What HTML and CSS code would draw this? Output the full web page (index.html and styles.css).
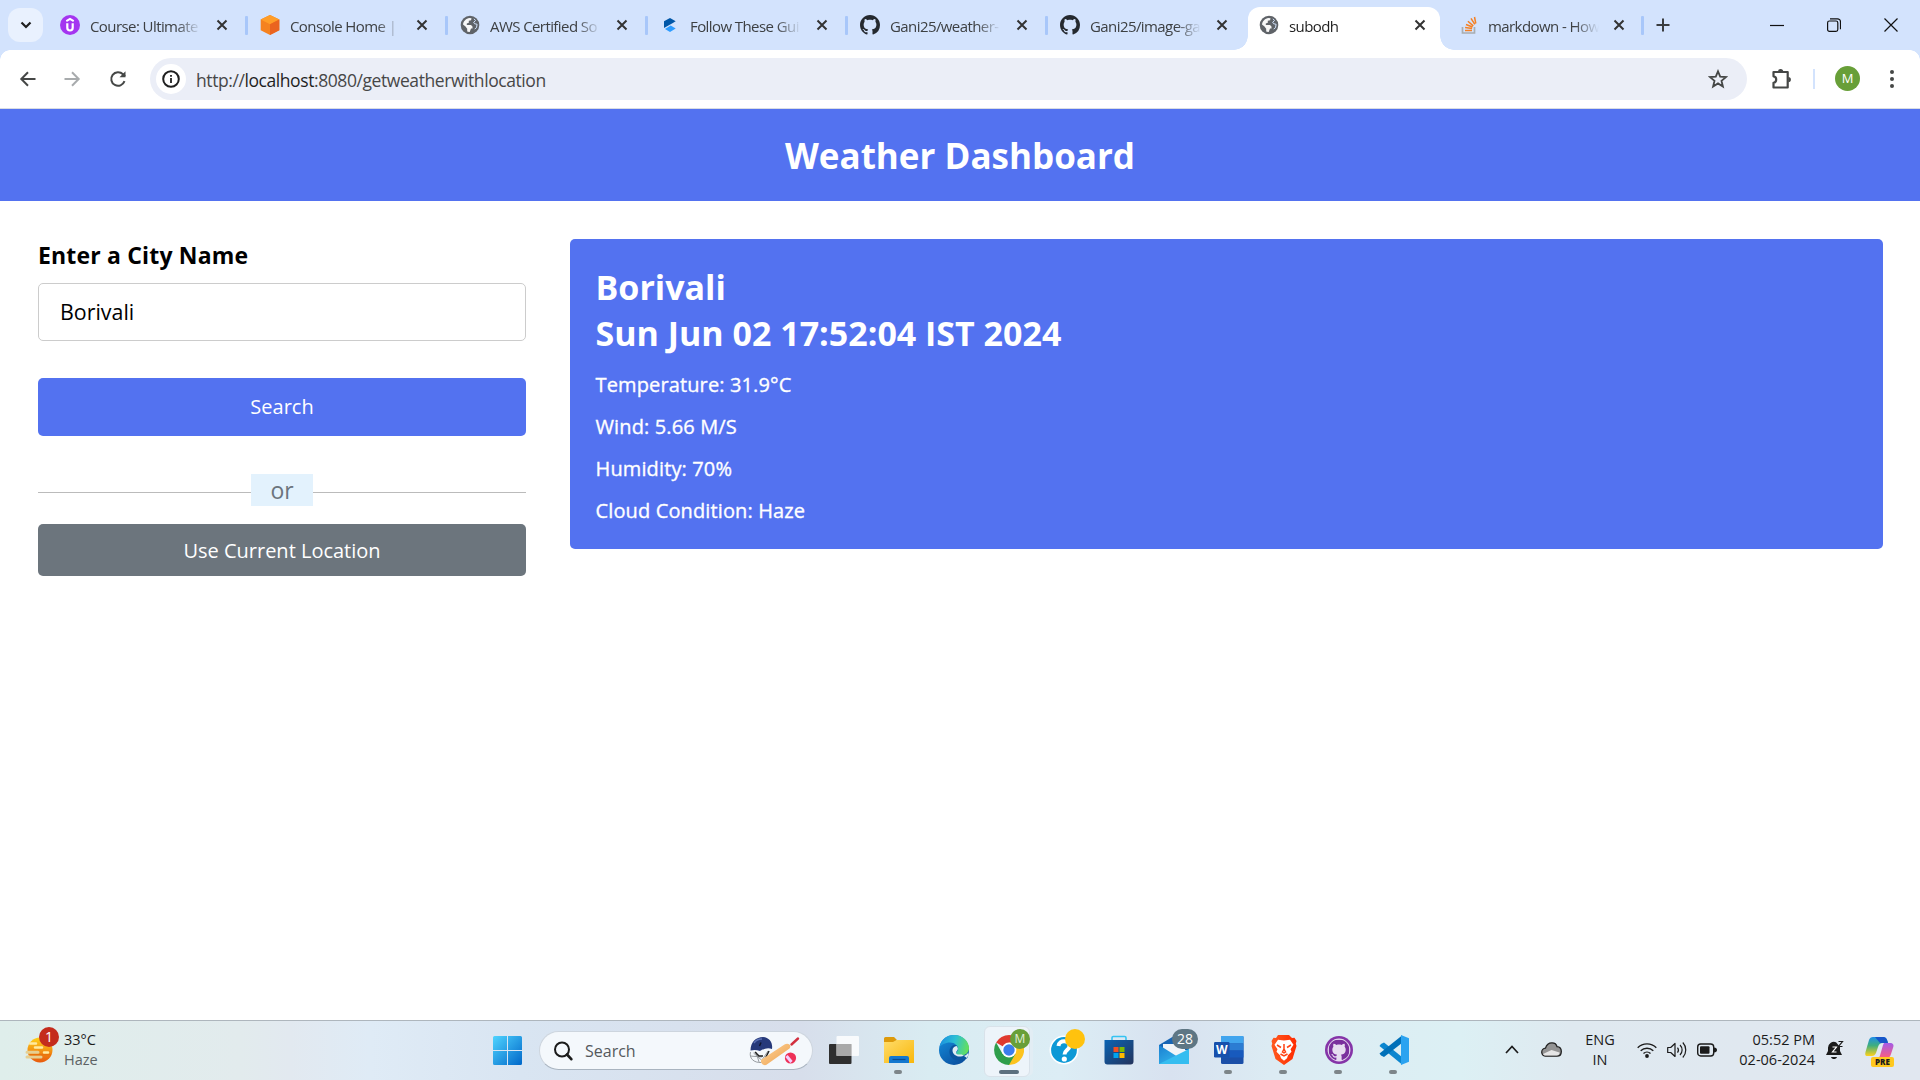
FILE: index.html
```html
<!DOCTYPE html>
<html lang="en">
<head>
<meta charset="utf-8">
<title>subodh</title>
<link rel="stylesheet" href="styles.css">
</head>
<body>
<svg class="defs" aria-hidden="true">
  <defs>
    <symbol id="close" viewBox="0 0 12 12"><path d="M1.500 1.500l9 9M10.500 1.500l-9 9" fill="none" stroke="currentColor" stroke-width="2"/></symbol>
    <symbol id="globe" viewBox="0 0 20 20"><circle cx="10" cy="10" r="9.300" fill="#5f6368"/><path d="M3 9.500c.5-3.500 3-6 6.500-6.500l2 .2-.4 2-2.300.5v2l-2 .8v1.500h4.200l1.500 1.600v2h-1.500l-1.300 3.300c-1 .2-2-.2-2.500-.5v-2.600L5.500 11.500z" fill="#fff" opacity=".95"/><path d="M14 3.800l1.500 1.800-1.800 1.600.8 1.500 2.600.6-.6 3.400-1.800 1.300" fill="none" stroke="#d3e3fd" stroke-width="1"/></symbol>
    <symbol id="github" viewBox="0 0 16 16"><path d="M8 0C3.580 0 0 3.580 0 8c0 3.540 2.290 6.530 5.470 7.590.4.070.55-.17.55-.38 0-.19-.01-.82-.01-1.490-2.010.37-2.530-.49-2.690-.94-.09-.23-.48-.94-.82-1.130-.28-.15-.68-.52-.01-.53.63-.01 1.080.58 1.230.82.72 1.210 1.870.87 2.330.66.070-.52.28-.87.51-1.070-1.780-.2-3.640-.89-3.640-3.950 0-.87.31-1.590.82-2.150-.08-.2-.36-1.020.08-2.120 0 0 .67-.21 2.200.82.640-.18 1.320-.27 2-.27s1.360.09 2 .27c1.530-1.040 2.200-.82 2.200-.82.440 1.100.16 1.920.08 2.120.51.560.82 1.270.82 2.150 0 3.070-1.870 3.750-3.650 3.950.29.25.54.730.54 1.480 0 1.070-.01 1.930-.01 2.200 0 .21.15.46.55.38A8.010 8.010 0 0 0 16 8c0-4.420-3.580-8-8-8z"/></symbol>
    <linearGradient id="gWin" x1="0" y1="0" x2="1" y2="1"><stop offset="0" stop-color="#4fd4ff"/><stop offset="1" stop-color="#0067c9"/></linearGradient>
    <linearGradient id="gSun" x1="0" y1="0" x2="0" y2="1"><stop offset="0" stop-color="#ffd21a"/><stop offset="1" stop-color="#e8590c"/></linearGradient>
    <linearGradient id="gFolder" x1="0" y1="0" x2="1" y2="1"><stop offset="0" stop-color="#ffdc6a"/><stop offset="1" stop-color="#f9b70b"/></linearGradient>
    <linearGradient id="gEdge" x1="0" y1=".3" x2="1" y2=".5"><stop offset="0" stop-color="#1b8fe0"/><stop offset=".5" stop-color="#2cc0d4"/><stop offset="1" stop-color="#64e05c"/></linearGradient>
    <linearGradient id="gEdge2" x1="0" y1="0" x2=".7" y2="1"><stop offset="0" stop-color="#1590df"/><stop offset="1" stop-color="#0a4f9e"/></linearGradient>
    <linearGradient id="gStore" x1="0" y1="0" x2="1" y2="1"><stop offset="0" stop-color="#0a64b4"/><stop offset="1" stop-color="#24335c"/></linearGradient>
    <linearGradient id="gMail" x1="0" y1="0" x2="1" y2="1"><stop offset="0" stop-color="#1b7fd1"/><stop offset="1" stop-color="#39c5f3"/></linearGradient>
    <linearGradient id="gBrave" x1="0" y1="0" x2="1" y2="0"><stop offset="0" stop-color="#ff5a1f"/><stop offset="1" stop-color="#ff2a00"/></linearGradient>
    <linearGradient id="gCop1" x1="0" y1="0" x2="0" y2="1"><stop offset="0" stop-color="#1f8fe8"/><stop offset=".45" stop-color="#3fae7e"/><stop offset="1" stop-color="#ffd21a"/></linearGradient>
    <linearGradient id="gCop2" x1="0" y1="0" x2="0" y2="1"><stop offset="0" stop-color="#a35be8"/><stop offset="1" stop-color="#fb5d7d"/></linearGradient>
    <linearGradient id="gBat" x1="0" y1="0" x2="1" y2="1"><stop offset="0" stop-color="#ffd59b"/><stop offset="1" stop-color="#ec9f4c"/></linearGradient>
  </defs>
</svg>

<div class="screen">
  <div class="tabstrip">
    <button class="tab-search" aria-label="Search tabs"><svg width="12" height="8" viewBox="0 0 12 8"><path d="M1.500 1.500L6 6l4.500-4.500" fill="none" stroke="#1f1f1f" stroke-width="2.200"/></svg></button>
    <div class="tab"><svg class="fav" viewBox="0 0 20 20"><circle cx="10" cy="10" r="10" fill="#a435f0"/><path d="M6.300 6.200L10 4l3.700 2.200" fill="none" stroke="#fff" stroke-width="2"/><path d="M7.300 8.300v4.500c0 3.600 5.400 3.600 5.400 0V8.300" fill="none" stroke="#fff" stroke-width="2.200"/></svg><span class="tab-title">Course: Ultimate</span><svg class="x"><use href="#close"/></svg></div>
    <div class="tab"><svg class="fav" viewBox="0 0 20 20"><path d="M10 0l9.300 4.500v10.800L10 20 .7 15.300V4.500z" fill="#f58220"/><path d="M10 0l9.300 4.500L10 9.200.7 4.500z" fill="#ff9d28"/><path d="M10 9.200l9.300-4.700v10.800L10 20z" fill="#ea6420"/></svg><span class="tab-title">Console Home | C</span><svg class="x"><use href="#close"/></svg></div>
    <div class="tab"><svg class="fav"><use href="#globe"/></svg><span class="tab-title">AWS Certified So</span><svg class="x"><use href="#close"/></svg></div>
    <div class="tab"><svg class="fav" viewBox="0 0 20 20"><path d="M4 6.300l6-3.400 5.700 3.300-3.300 2L4 13z" fill="#0057a8"/><path d="M15.700 13.500L10 17l-5-3 5.700-3.500z" fill="#2d9cff"/></svg><span class="tab-title">Follow These Gui</span><svg class="x"><use href="#close"/></svg></div>
    <div class="tab"><svg class="fav gh"><use href="#github"/></svg><span class="tab-title">Gani25/weather-</span><svg class="x"><use href="#close"/></svg></div>
    <div class="tab no-sep"><svg class="fav gh"><use href="#github"/></svg><span class="tab-title">Gani25/image-ga</span><svg class="x"><use href="#close"/></svg></div>
    <div class="tab active"><svg class="fav"><use href="#globe"/></svg><span class="tab-title">subodh</span><svg class="x"><use href="#close"/></svg></div>
    <div class="tab last"><svg class="fav" viewBox="0 0 20 20"><path d="M2.500 12v6h12v-6" fill="none" stroke="#a9adb0" stroke-width="1.700"/><path d="M5 15.500h7M5.100 12.600l7 .9M6 9.500l6.500 2.500M7.900 6.300l5.400 4.600M11 3.300l3.800 6M14.500 2l1.300 6.500" stroke="#f48024" stroke-width="1.500"/></svg><span class="tab-title">markdown - How</span><svg class="x"><use href="#close"/></svg></div>
    <button class="new-tab" aria-label="New tab"><svg width="14" height="14" viewBox="0 0 14 14"><path d="M7 .5v13M.5 7h13" stroke="#3a3d40" stroke-width="2"/></svg></button>
    <div class="win-controls">
      <svg width="14" height="14" viewBox="0 0 14 14"><path d="M0 7.500h14" stroke="#111" stroke-width="1.200"/></svg>
      <svg width="14" height="14" viewBox="0 0 14 14"><rect x=".6" y="3" width="10.200" height="10.300" rx="1.800" fill="none" stroke="#111" stroke-width="1.200"/><path d="M3 .8h7.500a3 3 0 0 1 3 3v7.400" fill="none" stroke="#111" stroke-width="1.200"/></svg>
      <svg width="14" height="14" viewBox="0 0 14 14"><path d="M.5.500l13 13M13.500.500l-13 13" stroke="#111" stroke-width="1.200"/></svg>
    </div>
  </div>

  <div class="toolbar">
    <svg class="nav" viewBox="0 0 20 20"><path d="M17.500 10H4M10 3.300L3.300 10l6.700 6.700" fill="none" stroke="#454746" stroke-width="2"/></svg>
    <svg class="nav" viewBox="0 0 20 20"><path d="M2.500 10H16M10 3.300l6.700 6.700-6.700 6.700" fill="none" stroke="#a8abad" stroke-width="2"/></svg>
    <svg class="nav" viewBox="0 0 20 20"><path d="M16.500 12.200A6.800 6.800 0 1 1 15 5.300l2 2" fill="none" stroke="#454746" stroke-width="2"/><path d="M17.500 2.200v6h-6z" fill="#454746"/></svg>
    <div class="omnibox">
      <span class="info"><svg width="18" height="18" viewBox="0 0 18 18"><circle cx="9" cy="9" r="7.800" fill="none" stroke="#1f1f1f" stroke-width="2"/><path d="M9 8v5M9 5v1.800" stroke="#1f1f1f" stroke-width="1.800"/></svg></span>
      <span class="url">http://<b>localhost</b>:8080/getweatherwithlocation</span>
      <svg class="star" width="20" height="20" viewBox="0 0 20 20"><path d="M10 2.300l2.200 5.400 5.800.4-4.500 3.700 1.400 5.700-4.900-3.100-4.900 3.100 1.400-5.700L2 8.100l5.800-.4z" fill="none" stroke="#454746" stroke-width="1.800"/></svg>
    </div>
    <svg class="ext" width="24" height="24" viewBox="0 0 24 24"><path d="M3.500 5h14.200v15.500H3.500v-4.700c3.600-.3 3.600-6.200 0-6.500z" fill="none" stroke="#454746" stroke-width="2.200" stroke-linejoin="round"/><path d="M8 4.500a2.600 2.600 0 0 1 5.200 0zM18.300 10a2.600 2.600 0 0 1 0 5.200z" fill="#454746"/></svg>
    <span class="divider"></span>
    <span class="avatar">M</span>
    <svg class="dots" width="6" height="18" viewBox="0 0 6 18"><g fill="#454746"><circle cx="3" cy="2" r="2"/><circle cx="3" cy="9" r="2"/><circle cx="3" cy="16" r="2"/></g></svg>
  </div>

  <main class="page">
    <h1 class="page-title">Weather Dashboard</h1>
    <div class="container">
      <section class="weather-input">
        <h3>Enter a City Name</h3>
        <input class="city-input" type="text" value="Borivali">
        <button class="btn search-btn">Search</button>
        <div class="separator"><span>or</span></div>
        <button class="btn location-btn">Use Current Location</button>
      </section>
      <section class="weather-card">
        <h2>Borivali</h2>
        <h2>Sun Jun 02 17:52:04 IST 2024</h2>
        <h6 class="temp">Temperature: 31.9°C</h6>
        <h6>Wind: 5.66 M/S</h6>
        <h6>Humidity: 70%</h6>
        <h6>Cloud Condition: Haze</h6>
      </section>
    </div>
  </main>

  <footer class="taskbar">
    <div class="widget">
      <div class="widget-icon">
        <svg width="28" height="28" viewBox="0 0 28 28"><circle cx="15" cy="14" r="12.500" fill="url(#gSun)"/><path d="M5 7.500h6M10 11.500h7M19 16.500h4" stroke="#ffeaa0" stroke-width="2.500" stroke-linecap="round"/><path d="M2 16.300h11M2 21h14" stroke="#e6cf91" stroke-width="3" stroke-linecap="round"/><path d="M5 18.700h21" stroke="#e8730c" stroke-width="1.300"/></svg>
        <span class="badge red">1</span>
      </div>
      <div class="widget-text"><span>33°C</span><span class="muted">Haze</span></div>
    </div>
    <div class="app"><svg width="29" height="29" viewBox="0 0 29 29"><path d="M0 1.500A1.500 1.500 0 0 1 1.500 0H14v14H0zM15 0h12.500A1.500 1.500 0 0 1 29 1.500V14H15zM0 15h14v14H1.500A1.500 1.500 0 0 1 0 27.500zM15 15h14v12.500a1.500 1.500 0 0 1-1.500 1.500H15z" fill="url(#gWin)"/></svg></div>
    <div class="task-search">
      <svg width="20" height="20" viewBox="0 0 20 20"><circle cx="9" cy="8.500" r="7" fill="none" stroke="#1b1b1b" stroke-width="2"/><path d="M14 13.500l4.300 4.700" stroke="#1b1b1b" stroke-width="2.600" stroke-linecap="round"/></svg>
      <span>Search</span>
      <svg class="cricket" width="52" height="30" viewBox="0 0 52 30"><path d="M2.500 16c-1.500 6 3 11 11 10.500M5.500 17l8 7M2 20l12 1M8 16l3 10M20 15l-6 9" fill="none" stroke="#8d9296" stroke-width=".9"/><path d="M7 16l4 4h4M21 15l-4 8" fill="none" stroke="#222" stroke-width="1.500"/><path d="M2.500 14.500C2.500 6 8 1 15 1c6.500.500 10 5.500 9 12-4-1.500-8-.500-12 2-3.500-1.300-6-1.300-9.500-.500z" fill="#26397a"/><path d="M6 7c2-3 4-4 8-4" fill="none" stroke="#5a70b4" stroke-width="1.500"/><path d="M11.500 10l1.500-3.500" stroke="#10162e" stroke-width="1.500"/><path d="M43.500 8.500l6.500-6" stroke="#d22f3f" stroke-width="2.400" stroke-linecap="round"/><path d="M13.500 23.500L36.500 8.500c3-2 8 0 5 4L18.500 28.800c-3 1.500-7-2-5-5.300z" fill="url(#gBat)"/><circle cx="42.500" cy="22" r="5.600" fill="#ee3158"/><path d="M38.500 20l5 6" stroke="#f3cfff" stroke-width="3"/></svg>
    </div>
    <div class="app"><svg width="30" height="28" viewBox="0 0 30 28"><rect y="8" width="22.500" height="20" rx="1" fill="#2f2f2f"/><rect x="7.500" width="22.500" height="20" rx="1" fill="#fff" opacity=".82"/><path d="M7.500 8h15v12h-15z" fill="#a9a9a9"/></svg></div>
    <div class="app run"><svg width="30" height="28" viewBox="0 0 30 28"><path d="M0 2.500A1.500 1.500 0 0 1 1.500 1H10l3 3-3 4H0z" fill="#dd9a0b"/><path d="M0 6h9l3.500-2H30v23H0z" fill="url(#gFolder)"/><path d="M5 27v-5a2 2 0 0 1 2-2h16a2 2 0 0 1 2 2v5z" fill="#1478cf"/><path d="M8.500 23.500h13" stroke="#0b4c91" stroke-width="1.200"/></svg></div>
    <div class="app"><svg width="30" height="30" viewBox="0 0 30 30"><circle cx="15" cy="15" r="15" fill="url(#gEdge2)"/><path d="M.5 12C2 4 8 0 15 0c9 0 15 6.500 15 13 0 5-4 7.500-8 7.500-3 0-5-1.200-5-2.500s2-1.500 2-4c0-3-3-6.500-8-6.500C6 7.500 2 10 .5 12z" fill="url(#gEdge)"/><path d="M15 10c-3 1-5 4-4.500 8 .7 5 5 7.500 9.500 7.500 4 0 6-1 8.300-2.500L30 18l-4 2c-5 1.500-9 .5-9-2s2-2 2-4c0-1.700-1-3-2-4z" fill="#0b559f"/><path d="M18.900 14c0-1.200-.4-2-1.300-3-2.500.2-4.100 2.200-4.100 4.500 0 4 4.500 6.500 8.500 6 3-.3 6-1.500 7-3.500l.9.900-2 4-5-3.400h-3.800c-3-.7-2-3-.9-4z" fill="#dfedf4"/></svg></div>
    <div class="app current"><svg width="30" height="30" viewBox="0 0 30 30"><path d="M15 15L2.100 7.500A15 15 0 0 1 28 7.500z" fill="#e03a2f"/><path d="M28 7.500H15V30a15 15 0 0 0 13-22.500z" fill="#fcc31e"/><path d="M2.100 7.500A15 15 0 0 0 15 30l6.500-11.200H8.500z" fill="#2e9e4b"/><circle cx="15" cy="15" r="7.400" fill="#fff"/><circle cx="15" cy="15" r="5.700" fill="#3b7ded"/></svg><span class="badge profile">M</span></div>
    <div class="app"><svg width="30" height="30" viewBox="0 0 30 30"><circle cx="15" cy="15" r="13.700" fill="#0d99d6" stroke="#fff" stroke-width="1.600"/><path d="M9.500 11C10 4.500 20.500 5 20.500 11c0 4-5 4.200-5 8.500" fill="none" stroke="#fff" stroke-width="4"/><circle cx="15.300" cy="24" r="2.600" fill="#fff"/></svg><span class="badge yellow"></span></div>
    <div class="app"><svg width="30" height="30" viewBox="0 0 30 30"><path d="M8 6V2.800A1.300 1.300 0 0 1 9.300 1.500h11.400A1.300 1.300 0 0 1 22 2.800V6" fill="none" stroke="#35c3f2" stroke-width="1.600"/><path d="M.5 5h29v21.500a3 3 0 0 1-3 3h-23a3 3 0 0 1-3-3z" fill="url(#gStore)"/><path d="M9.500 12h5v5h-5z" fill="#f25022"/><path d="M15.500 12h5v5h-5z" fill="#7fba00"/><path d="M9.500 18h5v5h-5z" fill="#00a4ef"/><path d="M15.500 18h5v5h-5z" fill="#ffb900"/></svg></div>
    <div class="app"><svg width="30" height="30" viewBox="0 0 30 30"><path d="M0 10L15 1l15 9v5H0z" fill="#1765b5"/><path d="M4 9h22v9l-11 5L4 14z" fill="#f0f4f8"/><path d="M0 10l19 12L30 14v15H0z" fill="url(#gMail)"/><path d="M0 29l30-15v15z" fill="#35bdf0"/></svg><span class="badge count">28</span></div>
    <div class="app run"><svg width="30" height="30" viewBox="0 0 30 30"><rect x="7" y="1" width="22.500" height="28" rx="1.500" fill="#1b4fa8"/><path d="M7 1h22.500v7.500H7z" fill="#41a5ee"/><path d="M7 8.500h22.500v7H7z" fill="#2b7cd3"/><path d="M7 15.500h22.500v7H7z" fill="#185abd"/><rect y="7" width="15.500" height="15.500" rx="1.200" fill="#1750ac"/><text class="word" x="7.800" y="18.800" text-anchor="middle" fill="#fff">W</text></svg></div>
    <div class="app run"><svg width="30" height="30" viewBox="0 0 30 30"><path d="M9 0h11l3 3 2.500-.3L27.500 6l-.7 2.500L27.500 11l-4 13L15 30 6.500 24l-4-13 .7-2.500L2.500 6l2-3.300L7 3z" fill="url(#gBrave)"/><path d="M15 5.500l6-.8 3.500 5-3 4.500 1 2.500-3.500 3.500-1 3-3 2.500-3-2.500-1-3-3.500-3.500 1-2.500-3-4.500 3.500-5z" fill="#fff"/><path d="M15 9v5l-1.500 3 1.500.8 1.500-.8-1.500-3M8 10l4 2.500M22 10l-4 2.500M11.500 19l3.500 2 3.500-2" fill="none" stroke="#ff4314" stroke-width="1.500"/></svg></div>
    <div class="app run"><svg width="30" height="30" viewBox="0 0 30 30"><circle cx="15" cy="15" r="14" fill="#8534a8"/><circle cx="15" cy="15" r="11.400" fill="#e6dcf0"/><svg x="4.500" y="4.500" width="21" height="21" fill="#7a2f9d"><use href="#github"/></svg></svg></div>
    <div class="app run"><svg width="30" height="30" viewBox="0 0 30 30"><path d="M2 9l3-1.500L23 22v7.500L.5 11z" fill="#0b86cf"/><path d="M2 20.500L5 22 23 8V.500L.5 18.500z" fill="#0070b8"/><path d="M22 0l8 3.300v23.400L22 30z" fill="#2ba3f0"/></svg></div>

    <svg class="up" width="14" height="9" viewBox="0 0 14 9"><path d="M1 8l6-6.500L13 8" fill="none" stroke="#1b1b1b" stroke-width="1.700"/></svg>
    <svg class="cloud-icon" width="21" height="15" viewBox="0 0 21 15"><path d="M5 14.200a4 4 0 0 1-.5-8C5.500 2.500 8 .8 11 .8c2.500 0 4.500 1.500 5 3.900 6 .5 5.500 9.500 0 9.500z" fill="#949494" stroke="#222" stroke-width="1.300"/><path d="M2 12l8.500-4L18.500 10.500c0 2-1 3-3 3H5c-1.300 0-2.500-.5-3-1.500z" fill="#e6e6e6"/></svg>
    <div class="lang"><span>ENG</span><span>IN</span></div>
    <svg class="wifi" width="20" height="16" viewBox="0 0 20 16"><path d="M.7 5.700a13.200 13.200 0 0 1 18.600 0M3.700 8.800a8.900 8.900 0 0 1 12.600 0M6.500 11.600a5 5 0 0 1 7 0" fill="none" stroke="#1b1b1b" stroke-width="1.400"/><circle cx="10" cy="14" r="1.900" fill="#1b1b1b"/></svg>
    <svg class="vol" width="20" height="18" viewBox="0 0 20 18"><path d="M.7 6.500h3L8 2.500v13l-4.300-4h-3z" fill="none" stroke="#1b1b1b" stroke-width="1.200" stroke-linejoin="round"/><path d="M10.500 6.500a4 4 0 0 1 0 5M13 4a7 7 0 0 1 0 10M15.800 1.500a11 11 0 0 1 0 15" fill="none" stroke="#1b1b1b" stroke-width="1.200"/></svg>
    <svg class="batt" width="20" height="14" viewBox="0 0 20 14"><rect x=".7" y="1" width="16" height="12" rx="3" fill="none" stroke="#1b1b1b" stroke-width="1.400"/><rect x="3" y="3.300" width="9.500" height="7.400" rx="1" fill="#1b1b1b"/><path d="M17 4.500c4 0 4 5 0 5z" fill="#1b1b1b"/></svg>
    <div class="clock"><span>05:52 PM</span><span>02-06-2024</span></div>
    <svg class="bell" width="18" height="20" viewBox="0 0 18 20"><path d="M0 15l2-4V8a6 6 0 0 1 8-5.800L14 7v4l2 4zM5 17h6c-.8 2.800-5.200 2.800-6 0z" fill="#1b1b1b"/><path d="M6.500 7h4l-4 5h4" fill="none" stroke="#fff" stroke-width="1.200"/><path d="M12.500 1.500h4l-4 5h4" fill="none" stroke="#1b1b1b" stroke-width="1.200"/></svg>
    <div class="copilot"><svg width="29" height="24" viewBox="0 0 29 24"><path d="M8 1h10c3 0 4 2 5 6h-5c-3 0-4 1-5 4l-2 6c-1 2-2 3-4 3H2c-2 0-2-2-1.500-4L4 4c.7-2 2-3 4-3z" fill="url(#gCop1)"/><path d="M10 1h8c3 0 4 2 5 6h-8z" fill="#1756c9"/><path d="M19 7h6c3 0 4 2 3.300 4L26 18c-1 3-2 4-5 4h-9c3 0 3-3 4-6l2-7z" fill="url(#gCop2)"/></svg><span class="pre">PRE</span></div>
  </footer>
</div>
</body>
</html>
```

FILE: styles.css
```css
* { box-sizing: border-box; }
body { margin: 0; font-family: "Open Sans", "Noto Sans", sans-serif; color: #000; }
button { border: 0; padding: 0; font-family: inherit; }
svg { display: block; flex: none; }
h1, h2, h3, h6 { margin: 0; }
.defs { position: absolute; width: 0; height: 0; }
.screen { width: 1920px; height: 1080px; display: flex; flex-direction: column; overflow: hidden; background: #fff; }

/* Browser tab strip */
.tabstrip { height: 50px; display: flex; background: #d3e3fd; padding-left: 8px; flex: none; }
.tab-search { width: 35px; height: 34px; margin: 8px 5px 0 0; border-radius: 12px; background: #e9f1fe; display: grid; place-items: center; }
.tab { width: 200px; height: 50px; padding-left: 12px; display: flex; align-items: center; position: relative; color: #3d4043; }
.tab::after { content: ""; position: absolute; right: 0; top: 16px; width: 3px; height: 19px; border-radius: 1px; background: #a8c7fa; }
.tab.no-sep::after { display: none; }
.fav { width: 20px; height: 20px; }
.fav.gh { fill: #24292f; }
.tab-title { width: 111px; margin-left: 10px; padding-top: 2px; font-size: 15px; letter-spacing: -.58px; line-height: 20px; white-space: nowrap; -webkit-mask-image: linear-gradient(90deg, #000 78%, transparent); mask-image: linear-gradient(90deg, #000 78%, transparent); }
.x { width: 12px; height: 12px; margin-left: 15px; color: #333; }
.tab.active { height: 43px; margin-top: 7px; width: 192px; margin-right: 8px; padding: 0 0 7px 11px; background: #fff; border-radius: 12px 12px 0 0; color: #1f1f1f; }
.tab.active .x { margin-left: 14px; }
.tab.active::before, .tab.active::after { content: ""; position: absolute; bottom: 0; top: auto; width: 14px; height: 14px; border-radius: 0; }
.tab.active::before { left: -14px; background: radial-gradient(circle at 0 0, transparent 13.500px, #fff 14px); }
.tab.active::after { right: -14px; background: radial-gradient(circle at 100% 0, transparent 13.500px, #fff 14px); }
.tab.last { width: 196px; }
.tab.last .tab-title { margin-left: 8px; }
.tab.last .x { margin-left: 14px; }
.new-tab { width: 37px; background: none; display: grid; place-items: center; }
.win-controls { margin-left: auto; margin-right: 22px; display: flex; gap: 43px; align-items: center; }

/* Browser toolbar */
.toolbar { height: 59px; flex: none; display: flex; align-items: center; padding: 0 24px 1px 17px; border-bottom: 1px solid #d8dce4;
  background: radial-gradient(circle at 10px 10px, #fff 9.500px, #d3e3fd 10px) 0 0 / 10px 10px no-repeat, radial-gradient(circle at 0 10px, #fff 9.500px, #d3e3fd 10px) 100% 0 / 10px 10px no-repeat, #fff; }
.nav { width: 20px; height: 20px; margin: 0 25px 0 1px; }
.nav:nth-child(2) { margin: 0 25px 0 -1px; }
.nav:nth-child(3) { margin: 0 22px 0 1px; }
.omnibox { width: 1597px; height: 42px; border-radius: 21px; background: #ebeef7; display: flex; align-items: center; padding-left: 6px; }
.info { width: 30px; height: 30px; border-radius: 50%; background: #fff; display: grid; place-items: center; }
.url { margin-left: 10px; padding-top: 2px; font-size: 17.500px; letter-spacing: -.42px; color: #474747; }
.url b { font-weight: 400; color: #1f1f1f; }
.star { margin: 0 19px 0 auto; }
.ext { margin-left: 23px; }
.divider { width: 2px; height: 20px; margin: 0 20px 0 19px; background: #d3e3fd; }
.avatar { width: 25px; height: 25px; border-radius: 50%; background: #689f38; color: #fff; font-size: 13px; line-height: 25px; text-align: center; }
.dots { margin-left: auto; margin-right: 1px; }

/* Dashboard page */
.page { flex: 1; }
.page-title { height: 92px; padding-top: 1px; background: #5372f0; color: #fff; text-align: center; font-size: 35px; line-height: 92px; font-weight: 700; }
.container { display: flex; align-items: flex-start; gap: 44px; padding: 38px 37px 0 38px; }
.weather-input { width: 488px; display: flex; flex-direction: column; }
.weather-input h3 { font-size: 23px; line-height: 33px; font-weight: 700; letter-spacing: .17px; margin-bottom: 11px; }
.city-input { height: 58px; border: 1px solid #ccc; border-radius: 5px; padding: 0 21px 2px; font: 400 21.400px "Open Sans", sans-serif; outline: none; }
.btn { color: #fff; font-size: 20px; border-radius: 5px; }
.search-btn { height: 58px; margin-top: 37px; padding-bottom: 2px; background: #5372f0; }
.separator { display: flex; align-items: center; height: 32px; margin: 38px 0 18px; color: #6c757d; font-size: 23px; }
.separator::before, .separator::after { content: ""; flex: 1; height: 1px; margin-top: 5px; background: #bbb; }
.separator span { width: 62px; height: 32px; line-height: 33px; text-align: center; background: #e3f2fd; }
.location-btn { height: 52px; background: #6c757d; }
.weather-card { flex: 1; height: 310px; padding: 25px 25.500px; border-radius: 5px; background: #5372f0; color: #fff; }
.weather-card h2 { font-size: 34px; line-height: 46px; font-weight: 700; }
.weather-card h6 { font-size: 20px; line-height: 24px; font-weight: 500; letter-spacing: .13px; -webkit-text-stroke: .35px #fff; margin-top: 18px; }
.weather-card .temp { margin-top: 17px; }

/* Desktop taskbar */
.taskbar { height: 60px; flex: none; display: flex; align-items: center; border-top: 1px solid #aeb6bd; color: #1b1b1b; font-size: 15px;
  background: linear-gradient(90deg, #dfeeeb 0, #e2ebed 240px, #e2e9f0 290px, #dfebf6 370px, #d9e5f2 520px, #d7deeb 800px, #d9ecf2 930px, #dcedf5 1060px, #d8e2f0 1170px, #dcebf3 1270px, #dcf0f4 1460px, #dfe9f0 1570px, #e1e7f0 1920px); }
.widget { width: 480px; padding-left: 25px; display: flex; align-items: center; }
.widget-icon { position: relative; width: 28px; height: 28px; margin-top: -2px; }
.widget-text { margin: -2px 0 0 11px; display: flex; flex-direction: column; line-height: 20px; font-size: 14.500px; }
.muted { color: #5c6264; }
.badge { position: absolute; border-radius: 10px; color: #fff; text-align: center; line-height: 20px; height: 20px; font-size: 14px; }
.badge.red { left: 14px; top: -9px; width: 20px; background: #c42b1c; }
.app { position: relative; width: 55px; height: 59px; padding-bottom: 1px; display: grid; place-items: center; flex: none; }
.app > svg { position: relative; }
.run::after, .current::after { content: ""; position: absolute; left: 23px; bottom: 6px; width: 8px; height: 4px; border-radius: 2px; background: #7d8589; }
.current::after { left: 18px; width: 20px; background: #5c6f7e; }
.current::before { content: ""; position: absolute; left: 3px; top: 5px; width: 44px; height: 49px; border-radius: 6px; background: #edf4fa; border: 1px solid #d9e2ea; box-shadow: 4px 0 0 -1px #e2edf4; }
.badge.profile { left: 29px; top: 8px; width: 20px; background: #689f38; font-size: 12px; color: #e3efd9; }
.badge.yellow { left: 29px; top: 8px; width: 20px; background: #ffc20e; }
.badge.count { left: 26px; top: 8px; width: 26px; background: #5e7684; font-size: 14px; }
.word { font: 700 12px "Open Sans", sans-serif; }
.task-search { width: 274px; height: 39px; margin: 0 3px 0 4px; border-radius: 20px; border: 1px solid #cdd5de; border-bottom-color: #a9b4c0; background: #f4f8fc; display: flex; align-items: center; padding: 0 12px 0 13px; color: #55595d; font-size: 16px; flex: none; }
.task-search span { margin-left: 12px; }
.cricket { margin-left: auto; }
.up { margin: -2px 0 0 84px; }
.cloud-icon { margin: -2px 0 0 22px; }
.lang { width: 42px; margin: -2px 0 0 17px; text-align: center; display: flex; flex-direction: column; line-height: 20px; font-size: 14.500px; }
.wifi { margin: -2px 0 0 16px; }
.vol { margin: -1px 0 0 10px; }
.batt { margin: -1px 0 0 10px; }
.clock { width: 98px; margin-top: -2px; text-align: right; display: flex; flex-direction: column; line-height: 20px; font-size: 14.500px; }
.bell { margin: -1px 0 0 11px; }
.copilot { position: relative; width: 29px; height: 30px; margin-left: 21px; }
.pre { position: absolute; left: 6px; bottom: -1px; width: 23px; height: 10px; border-radius: 2px; background: #ffc81e; font-size: 8px; line-height: 10px; font-weight: 800; text-align: center; }
```
